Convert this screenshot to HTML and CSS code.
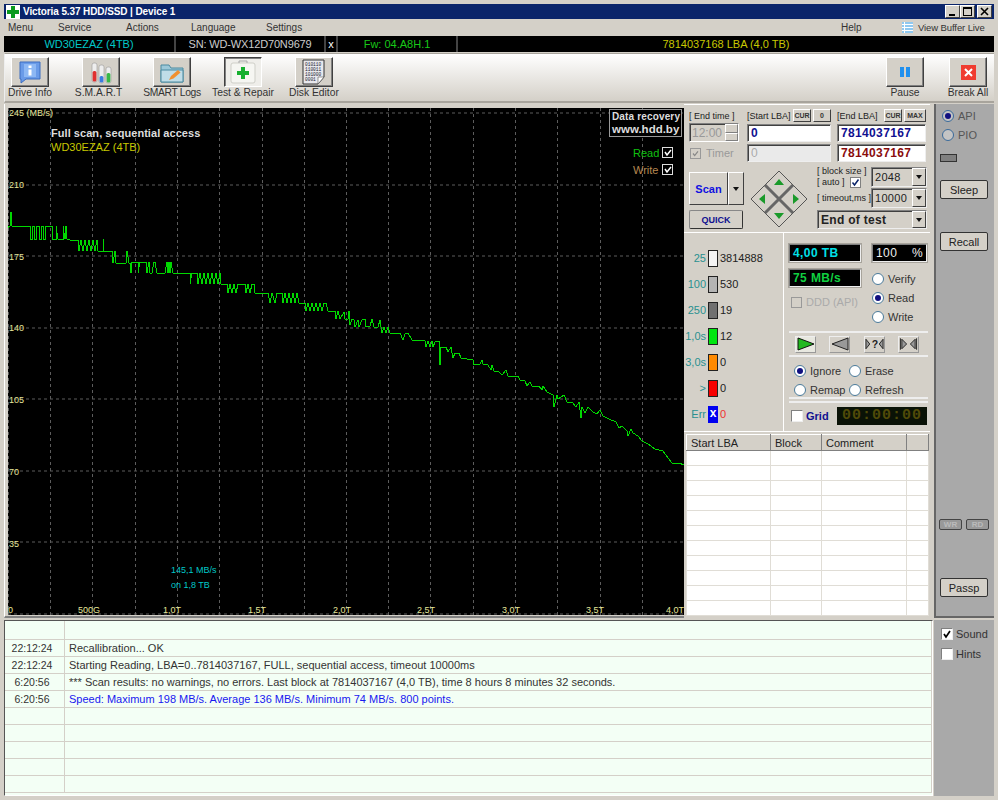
FILE: index.html
```html
<!DOCTYPE html>
<html lang="en">
<head>
    <meta charset="UTF-8">
    <title>Victoria 5.37 HDD/SSD | Device 1</title>
    <link rel="stylesheet" href="styles.css">
</head>
<body>
<div class="window">
  <div class="titlebar">
    <svg class="app-icon" width="14" height="14" viewBox="0 0 14 14"><rect width="14" height="14" fill="#fff"/><path d="M5 1h4v4h4v4H9v4H5V9H1V5h4z" fill="#0a9a1e"/></svg>
    <span class="title-text">Victoria 5.37 HDD/SSD | Device 1</span>
    <div class="win-btns">
      <span class="win-btn"><svg width="9" height="9" viewBox="0 0 9 9"><rect x="1" y="7" width="6" height="2" fill="#000"/></svg></span>
      <span class="win-btn"><svg width="9" height="9" viewBox="0 0 9 9"><path d="M0 0h9v9H0zM1 2v6h7V2z" fill="#000" fill-rule="evenodd"/></svg></span>
      <span class="win-btn win-btn-close"><svg width="9" height="9" viewBox="0 0 9 9"><path d="M1 1l7 7M8 1L1 8" stroke="#000" stroke-width="1.6"/></svg></span>
    </div>
  </div>

  <div class="menubar">
    <span class="menu-item m-menu">Menu</span>
    <span class="menu-item m-service">Service</span>
    <span class="menu-item m-actions">Actions</span>
    <span class="menu-item m-language">Language</span>
    <span class="menu-item m-settings">Settings</span>
    <span class="menu-item m-help">Help</span>
    <svg class="buffer-icon" width="11" height="11" viewBox="0 0 11 11"><rect width="11" height="11" fill="#8fc8f0"/><path d="M0 2.5h11M0 5.5h11M0 8.5h11" stroke="#fff"/><path d="M2.5 0v11" stroke="#fff"/></svg>
    <span class="menu-item m-buffer">View Buffer Live</span>
  </div>

  <div class="infobar">
    <span class="info-cell cell-model">WD30EZAZ (4TB)</span>
    <span class="info-cell cell-serial">SN: WD-WX12D70N9679</span>
    <span class="info-cell cell-x">x</span>
    <span class="info-cell cell-fw">Fw: 04.A8H.1</span>
    <span class="info-cell cell-lba">7814037168 LBA (4,0 TB)</span>
  </div>

  <div class="toolbar">
    <div class="tool">
      <span class="tool-btn">
        <svg width="24" height="24" viewBox="0 0 24 24"><path d="M2 2h20v17H8l-5 4v-4H2z" fill="#6a9be8" stroke="#3a6cc0"/><rect x="6" y="4" width="12" height="13" fill="#8db8f4"/><rect x="10.5" y="5.5" width="3" height="2.5" fill="#fff"/><rect x="10.5" y="9.5" width="3" height="6" fill="#fff"/></svg>
      </span>
      <span class="tool-label">Drive Info</span>
    </div>
    <div class="tool">
      <span class="tool-btn">
        <svg width="24" height="24" viewBox="0 0 24 24"><rect x="3" y="3" width="5" height="19" rx="2" fill="#eee" stroke="#999" stroke-width=".6"/><rect x="3.6" y="11" width="3.8" height="10.5" rx="1.5" fill="#e03030"/><rect x="10" y="5" width="5" height="18" rx="2" fill="#eee" stroke="#999" stroke-width=".6"/><rect x="10.6" y="16" width="3.8" height="6.5" rx="1.5" fill="#3a7ce0"/><rect x="17" y="7" width="5" height="16" rx="2" fill="#eee" stroke="#999" stroke-width=".6"/><rect x="17.6" y="13" width="3.8" height="9.5" rx="1.5" fill="#38b848"/></svg>
      </span>
      <span class="tool-label label-smart">S.M.A.R.T</span>
    </div>
    <div class="tool">
      <span class="tool-btn">
        <svg width="24" height="24" viewBox="0 0 24 24"><path d="M1 5h8l2 3h12v14H1z" fill="#9cc8d8" stroke="#4a8aa0"/><path d="M1 10h22v12H1z" fill="#c0dde8" stroke="#4a8aa0"/><path d="M9 20l2-4 7-6 2.500 2.500-7 6z" fill="#f09030"/></svg>
      </span>
      <span class="tool-label label-logs">SMART Logs</span>
    </div>
    <div class="tool">
      <span class="tool-btn tool-btn-active">
        <svg width="26" height="24" viewBox="0 0 26 24"><rect x="1" y="3" width="24" height="20" rx="2" fill="#f6f6f2" stroke="#cfcfc8"/><path d="M9 3V1h8v2" fill="none" stroke="#aaa"/><path d="M11 7h4v4h4v4h-4v4h-4v-4H7v-4h4z" fill="#18b030"/></svg>
      </span>
      <span class="tool-label">Test &amp; Repair</span>
    </div>
    <div class="tool">
      <span class="tool-btn">
        <svg width="28" height="28" viewBox="0 0 28 28"><path d="M3 2h21v17l-6 7H3z" fill="#e8e8ec" stroke="#333"/><path d="M24 19l-6 7v-7z" fill="#fff" stroke="#555" stroke-width=".6"/><text x="5" y="7.500" class="bin-text">010110</text><text x="5" y="12.500" class="bin-text">110011</text><text x="5" y="17.500" class="bin-text">101000</text><text x="5" y="22.500" class="bin-text">0001</text></svg>
      </span>
      <span class="tool-label">Disk Editor</span>
    </div>
    <div class="tool tool-pause">
      <span class="tool-btn">
        <svg width="12" height="12" viewBox="0 0 12 12"><rect x="1" y="1" width="4" height="10" fill="#2090ee"/><rect x="7" y="1" width="4" height="10" fill="#2090ee"/></svg>
      </span>
      <span class="tool-label">Pause</span>
    </div>
    <div class="tool tool-break">
      <span class="tool-btn">
        <svg width="15" height="15" viewBox="0 0 15 15"><rect width="15" height="15" fill="#f03c30"/><path d="M4 4l7 7M11 4l-7 7" stroke="#fff" stroke-width="2"/></svg>
      </span>
      <span class="tool-label">Break All</span>
    </div>
  </div>

  <div class="main">
    <div class="chart-panel">
      <svg class="chart" width="676" height="507" viewBox="8 108 676 507">
        <rect x="8" y="108" width="676" height="507" fill="#000"/>
        <g class="grid-lines">
          <path d="M8 113H684M8 185H684M8 256H684M8 328H684M8 399H684M8 471H684M8 542H684M8 614H684"/>
          <path d="M8.500 108V615M50.500 108V615M92.500 108V615M135.500 108V615M177.500 108V615M219.500 108V615M262.500 108V615M304.500 108V615M346.500 108V615M388.500 108V615M430.500 108V615M473.500 108V615M515.500 108V615M557.500 108V615M600.500 108V615M642.500 108V615"/>
        </g>
        <polyline class="plot" points="8,228 9,226 10,226 11,212 12,226 30,226 30,239 32,239 32,226 34,226 34,239 36,239 36,226 39,226 39,239 41,239 41,226 43,226 43,239 45,239 45,226 52,226 52,239 56,239 56,226 58,239 63,239 63,226 65,239 66,226 67,239 69,239 70,240 78,240 79,251 81,240 83,251 85,240 87,251 89,240 91,251 93,240 95,251 97,240 98,251 103,251 103,239 104,251 112,251 113,263 115,251 116,263 118,263 126,263 127,251 129,263 130,263 131,273 132,262 138,262 138,273 140,262 146,262 147,273 149,262 150,273 152,273 154,262 155,262 157,273 165,273 167,262 168,273 169,262 170,273 171,262 173,273 190,273 190,284 192,273 197,273 198,284 200,273 202,284 204,273 206,284 208,273 210,284 212,273 214,284 216,273 218,284 220,273 221,284 227,284 228,293 230,284 232,293 234,284 236,293 238,284 245,284 246,293 248,284 250,293 252,284 254,284 255,293 268,293 270,303 272,293 275,303 277,293 282,293 283,303 285,293 287,303 289,293 291,303 293,293 295,303 297,293 299,303 305,303 306,311 308,303 310,311 312,303 314,311 316,303 318,311 320,303 322,311 324,303 326,303 328,311 335,311 336,319 338,311 340,319 344,312 345,319 348,319 349,311 350,325 352,319 354,320 355,327 358,320 359,327 362,320 365,319 366,327 370,326 372,319 374,327 378,327 380,320 381,327 382,333 384,327 386,333 388,327 390,333 400,333 403,340 405,334 408,333 412,340 425,341 426,347 428,341 430,347 432,341 433,347 435,342 439,341 440,365 441,347 446,347 448,352 451,347 453,358 455,353 459,353 461,358 473,360 474,365 480,364 482,360 483,364 488,365 491,370 492,365 494,371 498,371 502,375 506,370 508,376 518,376 520,380 525,381 527,386 530,382 532,386 539,386 542,390 543,386 547,392 553,395 554,407 557,395 558,399 564,395 567,402 573,403 576,407 579,402 581,418 582,407 585,413 588,407 593,412 597,414 600,410 603,416 609,419 616,422 619,428 622,426 627,431 628,436 631,429 633,433 638,436 642,441 648,444 655,449 663,451 668,458 672,463 675,463 679,463 684,465"/>
        <g class="tick-labels">
          <text x="9" y="116">245 (MB/s)</text>
          <text x="9" y="188">210</text>
          <text x="9" y="260">175</text>
          <text x="9" y="331">140</text>
          <text x="9" y="403">105</text>
          <text x="9" y="475">70</text>
          <text x="9" y="547">35</text>
          <text x="8" y="613">0</text>
          <text x="78" y="613">500G</text>
          <text x="163" y="613">1,0T</text>
          <text x="248" y="613">1,5T</text>
          <text x="333" y="613">2,0T</text>
          <text x="417" y="613">2,5T</text>
          <text x="502" y="613">3,0T</text>
          <text x="586" y="613">3,5T</text>
          <text x="666" y="613">4,0T</text>
        </g>
        <text class="chart-title" x="51" y="137">Full scan, sequential access</text>
        <text class="chart-model" x="51" y="151">WD30EZAZ (4TB)</text>
        <text class="chart-note" x="171" y="573">145,1 MB/s</text>
        <text class="chart-note" x="171" y="588">on 1,8 TB</text>
        <rect x="609.500" y="109.500" width="72" height="27" fill="#000" stroke="#999"/>
        <text class="ad-line" x="612" y="120">Data recovery</text>
        <text class="ad-line ad-url" x="612" y="133">www.hdd.by</text>
        <text class="legend-read" x="633" y="157">Read</text>
        <text class="legend-write" x="633" y="174">Write</text>
        <rect x="662.500" y="147.500" width="10" height="10" fill="#000" stroke="#ddd"/>
        <path d="M665 152l2 3 4-5" fill="none" stroke="#fff" stroke-width="1.500"/>
        <rect x="662.500" y="164.500" width="10" height="10" fill="#000" stroke="#ddd"/>
        <path d="M665 169l2 3 4-5" fill="none" stroke="#fff" stroke-width="1.500"/>
      </svg>
    </div>

    <div class="controls">
      <div class="scan-section">
        <div class="lba-grid">
          <span class="bracket">[ End time ]</span>
          <div class="lba-head">
            <span class="bracket">[Start LBA]</span>
            <span class="mini-btn">CUR</span>
            <span class="mini-btn">0</span>
          </div>
          <div class="lba-head">
            <span class="bracket">[End LBA]</span>
            <span class="mini-btn">CUR</span>
            <span class="mini-btn mini-btn-wide">MAX</span>
          </div>

          <div class="spin-field">
            <span>12:00</span>
            <span class="spin-arrows"><i></i><i></i></span>
          </div>
          <div class="field field-blue">0</div>
          <div class="field field-blue">7814037167</div>

          <label class="timer-check">
            <span class="check check-off"><svg width="11" height="11" viewBox="0 0 11 11"><path d="M2.500 5.500l2 2.500 4-5" fill="none" stroke="#888" stroke-width="1.500"/></svg></span>
            Timer
          </label>
          <div class="field field-off">0</div>
          <div class="field field-red">7814037167</div>
        </div>

        <div class="scan-lower">
          <div class="scan-btns">
            <div class="scan-split">
              <span class="scan-btn">Scan</span>
              <span class="scan-drop"><i class="arrow-down"></i></span>
            </div>
            <span class="quick-btn">QUICK</span>
          </div>
          <svg class="dpad" width="58" height="58" viewBox="0 0 58 58">
            <polygon points="29,1 57,29 29,57 1,29" fill="#d4d0c8" stroke="#555"/>
            <path d="M15 15L43 43M43 15L15 43" stroke="#666" stroke-width="3"/>
            <path d="M29 9l5 6H24zM29 49l5-6H24zM9 29l6-5v10zM49 29l-6-5v10z" fill="#1a9a2a"/>
          </svg>
          <div class="scan-opts">
            <div class="opt-grid">
              <div class="opt-labels">
                <span class="bracket">[ block size ]</span>
                <div class="auto-row">
                  <span class="bracket">[ auto ]</span>
                  <span class="check check-mini"><svg width="9" height="9" viewBox="0 0 9 9"><path d="M1.500 4.500l2 2.500 4-5.500" fill="none" stroke="#0a246a" stroke-width="1.500"/></svg></span>
                </div>
                <span class="bracket opt-timeout">[ timeout,ms ]</span>
              </div>
              <div class="opt-combos">
                <div class="combo"><span class="combo-text">2048</span><span class="combo-drop"><i class="arrow-down"></i></span></div>
                <div class="combo"><span class="combo-text">10000</span><span class="combo-drop"><i class="arrow-down"></i></span></div>
              </div>
            </div>
            <div class="combo combo-wide"><span class="combo-text">End of test</span><span class="combo-drop"><i class="arrow-down"></i></span></div>
          </div>
        </div>
      </div>

      <div class="status-section">
        <div class="stats">
          <span class="stat-label">25</span><i class="stat-bar bar-white"></i><span class="stat-val">3814888</span>
          <span class="stat-label">100</span><i class="stat-bar bar-light"></i><span class="stat-val">530</span>
          <span class="stat-label">250</span><i class="stat-bar bar-gray"></i><span class="stat-val">19</span>
          <span class="stat-label">1,0s</span><i class="stat-bar bar-green"></i><span class="stat-val">12</span>
          <span class="stat-label">3,0s</span><i class="stat-bar bar-orange"></i><span class="stat-val">0</span>
          <span class="stat-label">&gt;</span><i class="stat-bar bar-red"></i><span class="stat-val">0</span>
          <span class="stat-label">Err</span><i class="stat-bar bar-err">x</i><span class="stat-val stat-err">0</span>
        </div>
        <div class="status-right">
          <div class="readout-rows">
            <div class="readouts-left">
              <div class="readout readout-cyan">4,00 TB</div>
              <div class="readout readout-green">75 MB/s</div>
              <label class="ddd"><span class="check check-off"></span>DDD (API)</label>
            </div>
            <div class="readouts-right">
              <div class="readout readout-pct"><span>100</span><span>%</span></div>
              <div class="radio-stack">
                <label class="radio-row"><i class="radio"></i>Verify</label>
                <label class="radio-row"><i class="radio radio-on"></i>Read</label>
                <label class="radio-row"><i class="radio"></i>Write</label>
              </div>
            </div>
          </div>
          <div class="transport">
            <span class="play-btn play-active"><svg width="18" height="14" viewBox="0 0 18 14"><path d="M1 1l16 6-16 6z" fill="#22b820" stroke="#111"/></svg></span>
            <span class="play-btn"><svg width="18" height="14" viewBox="0 0 18 14"><path d="M17 1L1 7l16 6z" fill="#999" stroke="#222"/></svg></span>
            <span class="play-btn"><svg width="20" height="14" viewBox="0 0 20 14"><path d="M1 2l4 5-4 5zM19 2l-4 5 4 5z" fill="#999" stroke="#222"/><text x="7" y="11" class="qmark">?</text></svg></span>
            <span class="play-btn"><svg width="20" height="14" viewBox="0 0 20 14"><path d="M3 2l5 5-5 5zM17 2l-5 5 5 5z" fill="#999" stroke="#222"/><path d="M1.500 1v12M18.500 1v12" stroke="#222"/></svg></span>
          </div>
          <div class="mode-group">
            <label class="radio-row"><i class="radio radio-on"></i>Ignore</label>
            <label class="radio-row"><i class="radio"></i>Erase</label>
            <label class="radio-row"><i class="radio"></i>Remap</label>
            <label class="radio-row"><i class="radio"></i>Refresh</label>
          </div>
          <div class="grid-row">
            <label class="grid-check"><span class="check check-plain"></span>Grid</label>
            <div class="clock">00:00:00</div>
          </div>
        </div>
      </div>

      <table class="lba-table">
        <thead><tr><th class="col-lba">Start LBA</th><th class="col-block">Block</th><th class="col-comment">Comment</th><th></th></tr></thead>
        <tbody>
          <tr><td></td><td></td><td></td><td></td></tr>
          <tr><td></td><td></td><td></td><td></td></tr>
          <tr><td></td><td></td><td></td><td></td></tr>
          <tr><td></td><td></td><td></td><td></td></tr>
          <tr><td></td><td></td><td></td><td></td></tr>
          <tr><td></td><td></td><td></td><td></td></tr>
          <tr><td></td><td></td><td></td><td></td></tr>
          <tr><td></td><td></td><td></td><td></td></tr>
          <tr><td></td><td></td><td></td><td></td></tr>
          <tr><td></td><td></td><td></td><td></td></tr>
          <tr><td></td><td></td><td></td><td></td></tr>
        </tbody>
      </table>
    </div>

    <div class="side">
      <label class="radio-row side-radio"><i class="radio radio-blue radio-dot"></i>API</label>
      <label class="radio-row side-radio"><i class="radio radio-blue"></i>PIO</label>
      <i class="led"></i>
      <span class="side-btn btn-sleep">Sleep</span>
      <span class="side-btn btn-recall">Recall</span>
      <div class="wr-rd"><span>WR</span><span>RD</span></div>
      <span class="side-btn btn-passp">Passp</span>
    </div>
  </div>

  <div class="bottom">
    <div class="log-wrap">
      <table class="log">
        <tr class="log-first"><td class="log-time"></td><td></td></tr>
        <tr><td class="log-time">22:12:24</td><td>Recallibration... OK</td></tr>
        <tr><td class="log-time">22:12:24</td><td>Starting Reading, LBA=0..7814037167, FULL, sequential access, timeout 10000ms</td></tr>
        <tr><td class="log-time">6:20:56</td><td>*** Scan results: no warnings, no errors. Last block at 7814037167 (4,0 TB), time 8 hours 8 minutes 32 seconds.</td></tr>
        <tr><td class="log-time">6:20:56</td><td class="log-blue">Speed: Maximum 198 MB/s. Average 136 MB/s. Minimum 74 MB/s. 800 points.</td></tr>
        <tr><td class="log-time"></td><td></td></tr>
        <tr><td class="log-time"></td><td></td></tr>
        <tr><td class="log-time"></td><td></td></tr>
        <tr><td class="log-time"></td><td></td></tr>
        <tr><td class="log-time"></td><td></td></tr>
      </table>
    </div>
    <div class="side-bottom">
      <label class="side-check"><span class="check check-plain"><svg width="10" height="10" viewBox="0 0 10 10"><path d="M2 5l2 3 4-6" fill="none" stroke="#000" stroke-width="1.700"/></svg></span>Sound</label>
      <label class="side-check"><span class="check check-plain"></span>Hints</label>
    </div>
  </div>
</div>
</body>
</html>
```

FILE: styles.css
```css
html, body {
  margin: 0;
  padding: 0;
  background: #d4d0c8;
}
body {
  font-family: "Liberation Sans", Arial, sans-serif;
  font-size: 11px;
  color: #222;
}
i { font-style: normal; }
label { display: flex; align-items: center; }

.window {
  width: 998px;
  height: 800px;
  box-sizing: border-box;
  padding: 4px 4px 3px 4px;
  overflow: hidden;
}

/* title + menu */
.titlebar {
  height: 15px;
  background: #0a246a;
  display: flex;
  align-items: center;
  color: #fff;
  font-weight: bold;
  padding-left: 2px;
}
.app-icon { margin-right: 3px; }
.title-text { font-size: 10px; letter-spacing: -.1px; }
.win-btns { margin-left: auto; display: flex; gap: 0; padding-right: 2px; }
.win-btn {
  width: 15px;
  height: 13px;
  background: #d4d0c8;
  border: 1px solid;
  border-color: #fff #404040 #404040 #fff;
  box-sizing: border-box;
  display: flex;
  align-items: center;
  justify-content: center;
}
.win-btn-close { margin-left: 2px; }

.menubar {
  height: 17px;
  display: flex;
  align-items: center;
  font-size: 10px;
  color: #333;
}
.m-menu { margin-left: 4px; width: 50px; }
.m-service { width: 68px; }
.m-actions { width: 65px; }
.m-language { width: 75px; }
.m-settings { width: 575px; }
.m-help { width: 50px; }
.m-buffer { font-size: 9.500px; letter-spacing: -.1px; }
.buffer-icon { margin: 0 5px 0 11px; }

.infobar {
  height: 16px;
  margin-bottom: 1px;
  background: #000;
  display: flex;
  align-items: center;
  font-size: 11px;
}
.info-cell {
  height: 100%;
  display: flex;
  align-items: center;
  box-sizing: border-box;
  border-right: 2px solid #444;
  justify-content: center;
}
.cell-model { width: 172px; color: #00c8c8; }
.cell-serial { width: 150px; color: #ccc; letter-spacing: -.15px; }
.cell-x { width: 12px; color: #fff; }
.cell-fw { width: 120px; color: #18c818; }
.cell-lba { flex: 1; color: #c8c800; border-right: 0; }

/* toolbar */
.toolbar {
  height: 50px;
  box-sizing: border-box;
  border-top: 1px solid #a8a49c;
  border-bottom: 2px solid #a8a49c;
  border-left: 1px solid #eee;
  background: linear-gradient(#fff, #d4d0c8);
  display: flex;
  padding: 3px 0 0 0;
}
.tool {
  flex: none;
  width: 50px;
  margin-right: 21px;
  display: flex;
  flex-direction: column;
  align-items: center;
}
.tool-btn {
  flex: none;
  width: 38px;
  height: 30px;
  box-sizing: border-box;
  background: #d4d0c8;
  border: 1px solid;
  border-color: #fff #404040 #404040 #fff;
  box-shadow: inset -1px -1px #808080;
  display: flex;
  align-items: center;
  justify-content: center;
}
.tool-btn-active {
  background: #efeeea;
  border-color: #404040 #fff #fff #404040;
  box-shadow: inset 1px 1px #808080;
}
.tool-label { line-height: 12px; font-size: 10.300px; white-space: nowrap; color: #333; }
.label-smart { margin-right: 5px; }
.label-logs { letter-spacing: -.35px; }
.tool-pause { margin-left: 520px; margin-right: 13px; }
.tool-break { margin-right: 0; }
.bin-text { font-family: "Liberation Mono", monospace; font-size: 4.500px; fill: #223; }

/* main */
.main {
  height: 514px;
  margin-top: 1px;
  display: flex;
}
.chart-panel {
  width: 680px;
  box-sizing: border-box;
  padding: 4px 0 0 4px;
  border-left: 1px solid #fff;
  border-bottom: 2px solid #808080;
}
.chart { display: block; margin-left: -1px; }
.grid-lines path { stroke: #5c5c5c; stroke-dasharray: 3 3; fill: none; }
.plot { fill: none; stroke: #00d800; stroke-width: 1; shape-rendering: crispEdges; }
.tick-labels text { font-size: 9px; fill: #e6e69a; }
.chart-title { font-size: 11px; font-weight: bold; fill: #ddd; letter-spacing: .05px; }
.chart-model { font-size: 11px; fill: #c8c800; }
.chart-note { font-size: 9px; fill: #00c8c8; }
.ad-line { font-size: 10px; font-weight: bold; fill: #ddd; letter-spacing: .15px; }
.ad-url { font-size: 11.500px; letter-spacing: 0; }
.legend-read { font-size: 11px; fill: #10c010; }
.legend-write { font-size: 11px; fill: #b88850; }

/* right controls */
.controls {
  width: 250px;
  display: flex;
  flex-direction: column;
  box-sizing: border-box;
  padding-right: 4px;
}
.scan-section {
  height: 129px;
  box-sizing: border-box;
  padding: 5px 0 0 5px;
  border-bottom: 1px solid #fff;
  border-top: 1px solid #fff;
}
.lba-grid {
  display: grid;
  grid-template-columns: 52px 84px 89px;
  grid-template-rows: 11px 19px 18px;
  column-gap: 6px;
  row-gap: 2px;
  align-items: center;
}
.bracket { font-size: 9px; white-space: nowrap; color: #222; }
.lba-head { display: flex; align-items: center; }
.lba-head .bracket { margin-right: auto; }
.mini-btn {
  width: 18px;
  height: 13px;
  margin-left: 2px;
  box-sizing: border-box;
  background: #d4d0c8;
  border: 1px solid;
  border-color: #fff #404040 #404040 #fff;
  font-size: 7px;
  font-weight: bold;
  line-height: 11px;
  text-align: center;
  color: #333;
}
.mini-btn-wide { width: 22px; }
.spin-field {
  height: 19px;
  width: 50px;
  box-sizing: border-box;
  border: 1px solid;
  border-color: #808080 #fff #fff #808080;
  box-shadow: inset 1px 1px #404040;
  font-size: 12px;
  color: #999;
  display: flex;
  align-items: center;
  justify-content: space-between;
  padding-left: 2px;
}
.spin-arrows { width: 13px; height: 100%; display: flex; flex-direction: column; }
.spin-arrows i {
  flex: 1;
  border: 1px solid;
  border-color: #fff #808080 #808080 #fff;
}
.field {
  box-sizing: border-box;
  height: 18px;
  border: 1px solid;
  border-color: #808080 #eee #eee #808080;
  box-shadow: inset 1px 1px #404040;
  background: #fff;
  font-size: 12px;
  font-weight: bold;
  line-height: 16px;
  padding-left: 3px;
  letter-spacing: .35px;
}
.field-blue { color: #101090; }
.field-red { color: #8a0c0c; }
.field-off { background: #eaeaea; color: #aaa; font-weight: normal; }
.timer-check { color: #999; font-size: 11px; gap: 5px; padding-left: 1px; }
.check {
  display: inline-flex;
  align-items: center;
  justify-content: center;
  width: 11px;
  height: 11px;
  box-sizing: border-box;
  flex: none;
}
.check-off { border: 1px solid #999; background: #d4d0c8; }
.check-mini { background: #fff; border: 1px solid #808080; margin-left: auto; }
.check-plain { background: #fff; width: 12px; height: 12px; border: 1px solid; border-color: #808080 #eee #eee #808080; }

.scan-lower { display: flex; margin-top: 4px; }
.scan-btns { width: 56px; padding-top: 6px; display: flex; flex-direction: column; }
.scan-split { display: flex; height: 33px; }
.scan-btn, .scan-drop, .quick-btn, .side-btn {
  box-sizing: border-box;
  background: #d4d0c8;
  border: 1px solid;
  border-color: #fff #404040 #404040 #fff;
  display: flex;
  align-items: center;
  justify-content: center;
}
.scan-btn { width: 39px; color: #1010e0; font-weight: bold; font-size: 11px; }
.scan-drop { width: 16px; }
.arrow-down {
  display: block;
  width: 0;
  height: 0;
  border: 3.500px solid transparent;
  border-top: 4px solid #111;
  border-bottom: 0;
}
.quick-btn {
  width: 54px;
  height: 19px;
  margin-top: 5px;
  color: #101090;
  font-weight: bold;
  font-size: 9px;
  border-radius: 2px;
  border-color: #888 #333 #333 #888;
}
.dpad { margin: 4px 0 0 5px; }
.scan-opts { margin-left: 9px; width: 110px; }
.opt-grid { display: flex; justify-content: space-between; }
.opt-labels { display: flex; flex-direction: column; width: 54px; }
.auto-row { display: flex; align-items: center; height: 12px; width: 44px; }
.opt-timeout { margin-top: 5px; }
.opt-combos { display: flex; flex-direction: column; gap: 1px; padding-top: 1px; }
.combo {
  width: 56px;
  height: 20px;
  box-sizing: border-box;
  border: 1px solid;
  border-color: #808080 #eee #eee #808080;
  box-shadow: inset 1px 1px #404040;
  display: flex;
  align-items: stretch;
  font-size: 11px;
}
.combo-text { flex: 1; padding-left: 3px; line-height: 18px; letter-spacing: .3px; }
.combo-drop {
  width: 14px;
  border: 1px solid;
  border-color: #fff #404040 #404040 #fff;
  box-sizing: border-box;
  display: flex;
  align-items: center;
  justify-content: center;
}
.combo-wide { width: 110px; height: 19px; margin-top: 2px; font-weight: bold; font-size: 12px; }

/* status */
.status-section {
  height: 198px;
  display: flex;
  border-bottom: 1px solid #fff;
}
.stats {
  width: 100px;
  box-sizing: border-box;
  border-right: 1px solid #fff;
  display: grid;
  grid-template-columns: 22px 10px auto;
  grid-auto-rows: 26px;
  column-gap: 2px;
  align-items: center;
  align-content: start;
  padding: 12px 0 0 0;
}
.stat-label { color: #2a9090; text-align: right; font-size: 11px; }
.stat-bar {
  display: block;
  width: 10px;
  height: 17px;
  box-sizing: border-box;
  border: 1px solid #222;
  text-align: center;
  color: #fff;
  font-weight: bold;
  line-height: 13px;
  font-size: 12px;
}
.bar-white { background: #f4f4f4; }
.bar-light { background: #b4b4b4; }
.bar-gray { background: #707070; }
.bar-green { background: #00e610; }
.bar-orange { background: #ff8a00; }
.bar-red { background: #f80000; }
.bar-err { background: #0000f0; border-color: #0000f0; }
.stat-val { font-size: 11px; }
.stat-err { color: #f03030; }

.status-right { width: 144px; padding-left: 5px; box-sizing: border-box; }
.readout-rows { display: flex; height: 98px; padding-top: 11px; box-sizing: border-box; }
.readouts-left { width: 83px; }
.readouts-right { flex: 1; }
.readout {
  box-sizing: border-box;
  height: 18px;
  background: #000;
  border: 1px solid;
  border-color: #808080 #eee #eee #808080;
  box-shadow: 0 0 0 1px #a8a49c;
  display: flex;
  align-items: center;
  font-weight: bold;
  padding: 0 3px;
  font-size: 12px;
  letter-spacing: .4px;
}
.readouts-left .readout { width: 72px; margin-bottom: 7px; }
.readout-cyan { color: #00e0e8; }
.readout-green { color: #10d040; }
.readout-pct { width: 55px; color: #eee; justify-content: space-between; font-weight: normal; }
.ddd { color: #aaa; gap: 4px; padding-left: 2px; font-size: 11px; margin-top: 9px; }
.radio-stack { display: flex; flex-direction: column; gap: 6px; margin-top: 10px; }
.radio-row { gap: 4px; font-size: 11px; color: #333; height: 13px; white-space: nowrap; }
.radio {
  display: flex;
  align-items: center;
  justify-content: center;
  width: 12px;
  height: 12px;
  box-sizing: border-box;
  border-radius: 50%;
  background: #fff;
  border: 1px solid #4a7a9a;
  flex: none;
}
.radio-on::after, .radio-dot::after {
  content: "";
  width: 6px;
  height: 6px;
  border-radius: 50%;
  background: #101080;
}
.transport {
  height: 26px;
  box-sizing: border-box;
  border-top: 2px solid #eee;
  border-bottom: 2px solid #eee;
  display: flex;
  align-items: center;
  justify-content: space-between;
  padding: 0 9px 0 6px;
}
.play-btn {
  width: 21px;
  height: 17px;
  background: #d4d0c8;
  box-sizing: border-box;
  border: 1px solid;
  border-color: #eee #999 #999 #eee;
  display: flex;
  align-items: center;
  justify-content: center;
}
.play-active { background: #e8e8e0; }
.qmark { font-size: 11px; font-weight: bold; fill: #222; }
.mode-group {
  display: grid;
  grid-template-columns: 55px auto;
  row-gap: 5px;
  height: 40px;
  margin-top: 2px;
  padding: 5px 0 0 5px;
  box-sizing: border-box;
  border-bottom: 2px solid #eee;
}
.grid-row {
  margin-top: 2px;
  border-top: 2px solid #eee;
  display: flex;
  align-items: center;
  justify-content: space-between;
  padding: 4px 1px 0 2px;
}
.grid-check { gap: 3px; color: #101090; font-weight: bold; font-size: 11px; }
.clock {
  width: 90px;
  height: 18px;
  background: #0a1206;
  color: #504a08;
  font-family: "Liberation Mono", monospace;
  font-size: 15px;
  font-weight: bold;
  line-height: 18px;
  text-align: center;
  letter-spacing: 1px;
}

/* bad block table */
.lba-table {
  border-collapse: collapse;
  width: 243px;
  height: 182px;
  table-layout: fixed;
  background: #fff;
  margin: 2px 0 0 2px;
}
.lba-table th {
  background: #d4d0c8;
  font-weight: normal;
  font-size: 11px;
  text-align: left;
  padding: 0 0 0 4px;
  height: 15px;
  border: 1px solid #808080;
  border-top-color: #fff;
  border-left-color: #fff;
}
.lba-table td { border: 1px solid #e0ddd6; height: 14px; padding: 0; }
.col-lba { width: 79px; }
.col-block { width: 46px; }
.col-comment { width: 80px; }

/* gray side */
.side {
  width: 60px;
  background: #a9a9a9;
  display: flex;
  flex-direction: column;
  box-sizing: border-box;
  padding: 5px 0 0 6px;
  border-left: 2px solid #666;
  border-bottom: 2px solid #666;
  color: #444;
}
.side-radio { height: 13px; margin-bottom: 6px; color: #555; }
.radio-blue { background: #c4c4c4; border-color: #3a6a9a; }
.led {
  display: block;
  flex: none;
  width: 17px;
  height: 8px;
  background: #808080;
  border: 1px solid #333;
  box-sizing: border-box;
  margin: 7px 0 0 -2px;
}
.side-btn {
  flex: none;
  width: 48px;
  height: 19px;
  border: 1px solid #333;
  border-radius: 2px;
  color: #222;
  font-size: 11px;
  margin-left: -2px;
}
.btn-sleep { margin-top: 18px; }
.btn-recall { margin-top: 33px; }
.wr-rd { display: flex; gap: 4px; margin-top: 268px; margin-left: -3px; }
.wr-rd span {
  width: 23px;
  height: 11px;
  box-sizing: border-box;
  border: 1px solid #444;
  border-radius: 2px;
  background: #999;
  color: #bbb;
  font-size: 8px;
  font-weight: bold;
  text-align: center;
  line-height: 9px;
}
.btn-passp { margin-top: 48px; }

/* log */
.bottom {
  height: 176px;
  margin-top: 2px;
  display: flex;
}
.log-wrap {
  width: 929px;
  box-sizing: border-box;
  border: 1px solid;
  border-color: #555 #fff #fff #555;
  background: #f3fff5;
  overflow: hidden;
}
.log {
  border-collapse: collapse;
  width: 100%;
  table-layout: fixed;
}
.log td {
  height: 16px;
  padding: 0 0 0 4px;
  border: 1px solid #d4d0c8;
  border-left: 0;
  border-top: 0;
  font-size: 11px;
  color: #333;
  white-space: nowrap;
}
.log .log-first td { height: 18px; }
.log-time { width: 54px; text-align: center; }
.log td.log-time { padding: 0 5px 0 0; font-size: 10.500px; }
.log td.log-blue { color: #1818f0; }
.side-bottom {
  flex: 1;
  margin-left: 1px;
  background: #a9a9a9;
  box-sizing: border-box;
  padding: 8px 0 0 7px;
  display: flex;
  flex-direction: column;
  gap: 8px;
}
.side-check { gap: 3px; height: 12px; color: #333; }
```
